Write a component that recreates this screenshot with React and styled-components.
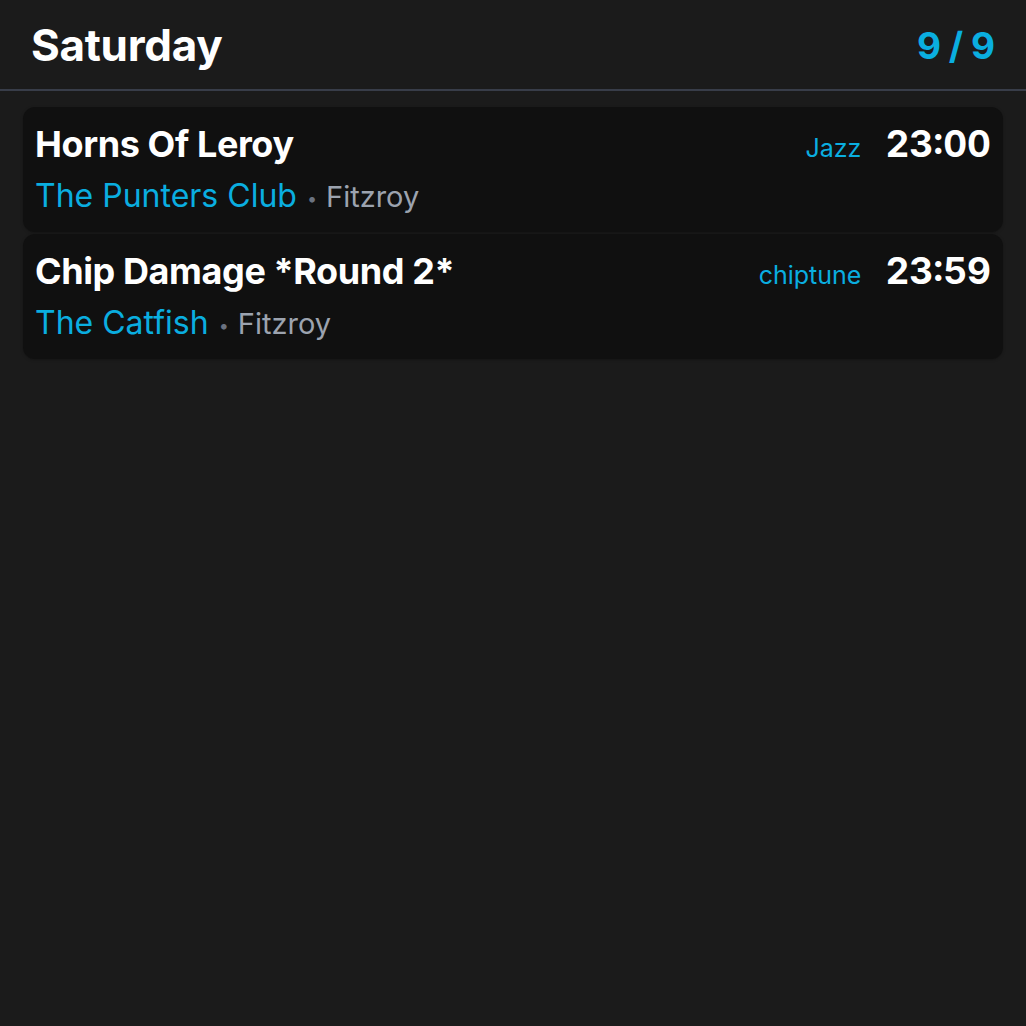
import styled, { createGlobalStyle } from 'styled-components'

const GlobalStyle = createGlobalStyle`
  html, body {
    margin: 0;
    padding: 0;
    background: #1b1b1b;
    font-family: Inter, 'Noto Sans', sans-serif;
    color: #ffffff;
  }
`

const accent = '#0aaee0'

const Page = styled.div`
  min-height: 1026px;
  background: #1b1b1b;
`

const Header = styled.header`
  display: flex;
  align-items: center;
  justify-content: space-between;
  height: 89px;
  padding: 0 31px;
  border-bottom: 2px solid #383d49;
`

const Day = styled.h1`
  margin: 2px 0 0;
  font-size: 44px;
  line-height: 1.2;
  font-weight: 700;
  letter-spacing: -0.3px;
`

const Count = styled.div`
  margin-top: 2px;
  font-size: 37px;
  font-weight: 700;
  color: ${accent};
  word-spacing: -1px;
`

const List = styled.div`
  display: flex;
  flex-direction: column;
  gap: 2px;
  padding: 16px 23px;
`

const Card = styled.div`
  background: #101010;
  border-radius: 12px;
  padding: 14px 12px 16px;
  box-shadow: 0 1px 3px rgba(0, 0, 0, 0.25);
`

const TopRow = styled.div`
  display: flex;
  align-items: baseline;
  gap: 24px;
  height: 44px;
`

const Title = styled.div`
  flex: 1;
  font-size: 36px;
  line-height: 44px;
  font-weight: 700;
  letter-spacing: -0.4px;
`

const Genre = styled.span`
  font-size: 25px;
  color: ${accent};
`

const Time = styled.span`
  font-size: 37px;
  font-weight: 700;
  font-variant-numeric: tabular-nums;
`

const Place = styled.div`
  margin-top: 11px;
  display: flex;
  align-items: baseline;
  height: 40px;
  line-height: 40px;
`

const Venue = styled.span`
  font-size: 32px;
  color: ${accent};
`

const Dot = styled.span`
  position: relative;
  top: -2px;
  font-size: 18px;
  color: #6b7280;
  margin: 0 9px 0 10px;
`

const Suburb = styled.span`
  font-size: 29px;
  color: #9ca3af;
`

const gigs = [
  { title: 'Horns Of Leroy', genre: 'Jazz', time: '23:00', venue: 'The Punters Club', suburb: 'Fitzroy' },
  { title: 'Chip Damage *Round 2*', genre: 'chiptune', time: '23:59', venue: 'The Catfish', suburb: 'Fitzroy' },
]

export default function App() {
  return (
    <Page>
      <GlobalStyle />
      <Header>
        <Day>Saturday</Day>
        <Count>9 / 9</Count>
      </Header>
      <List>
        {gigs.map((g) => (
          <Card key={g.title}>
            <TopRow>
              <Title>{g.title}</Title>
              <Genre>{g.genre}</Genre>
              <Time>{g.time}</Time>
            </TopRow>
            <Place>
              <Venue>{g.venue}</Venue>
              <Dot>•</Dot>
              <Suburb>{g.suburb}</Suburb>
            </Place>
          </Card>
        ))}
      </List>
    </Page>
  )
}
